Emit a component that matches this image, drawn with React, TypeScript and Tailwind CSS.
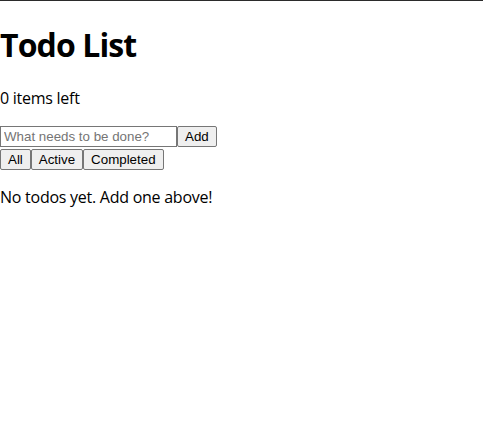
export default function App() {
  return (
    <div className="min-h-screen border-t border-[#2b2b2b] bg-white text-black font-['Open_Sans',sans-serif]">
      <h1 className="mt-[23px] mb-[21px] text-[32px] leading-[42px] font-bold tracking-[-0.028em]">Todo List</h1>
      <p className="mt-4 mb-[17px] text-base leading-[22px] tracking-[-0.016em]">0 items left</p>
      <form className="flex" onSubmit={(e) => e.preventDefault()}>
        <input
          placeholder="What needs to be done?"
          className="w-[177px] h-[21px] border border-[#767676] px-[3px] text-[13.33px] font-['Liberation_Sans',sans-serif] placeholder:text-[#757575]"
        />
        <button className="h-[21px] px-[7px] border border-[#767676] rounded-[2px] bg-[#efefef] text-[13.33px] font-['Liberation_Sans',sans-serif]">
          Add
        </button>
      </form>
      <div className="flex mt-[2px]">
        {['All', 'Active', 'Completed'].map((f) => (
          <button
            key={f}
            className="h-[21px] px-[7px] border border-[#767676] rounded-[2px] bg-[#efefef] text-[13.33px] font-['Liberation_Sans',sans-serif]"
          >
            {f}
          </button>
        ))}
      </div>
      <p className="my-4 text-base leading-[22px] tracking-[-0.016em]">No todos yet. Add one above!</p>
    </div>
  );
}
